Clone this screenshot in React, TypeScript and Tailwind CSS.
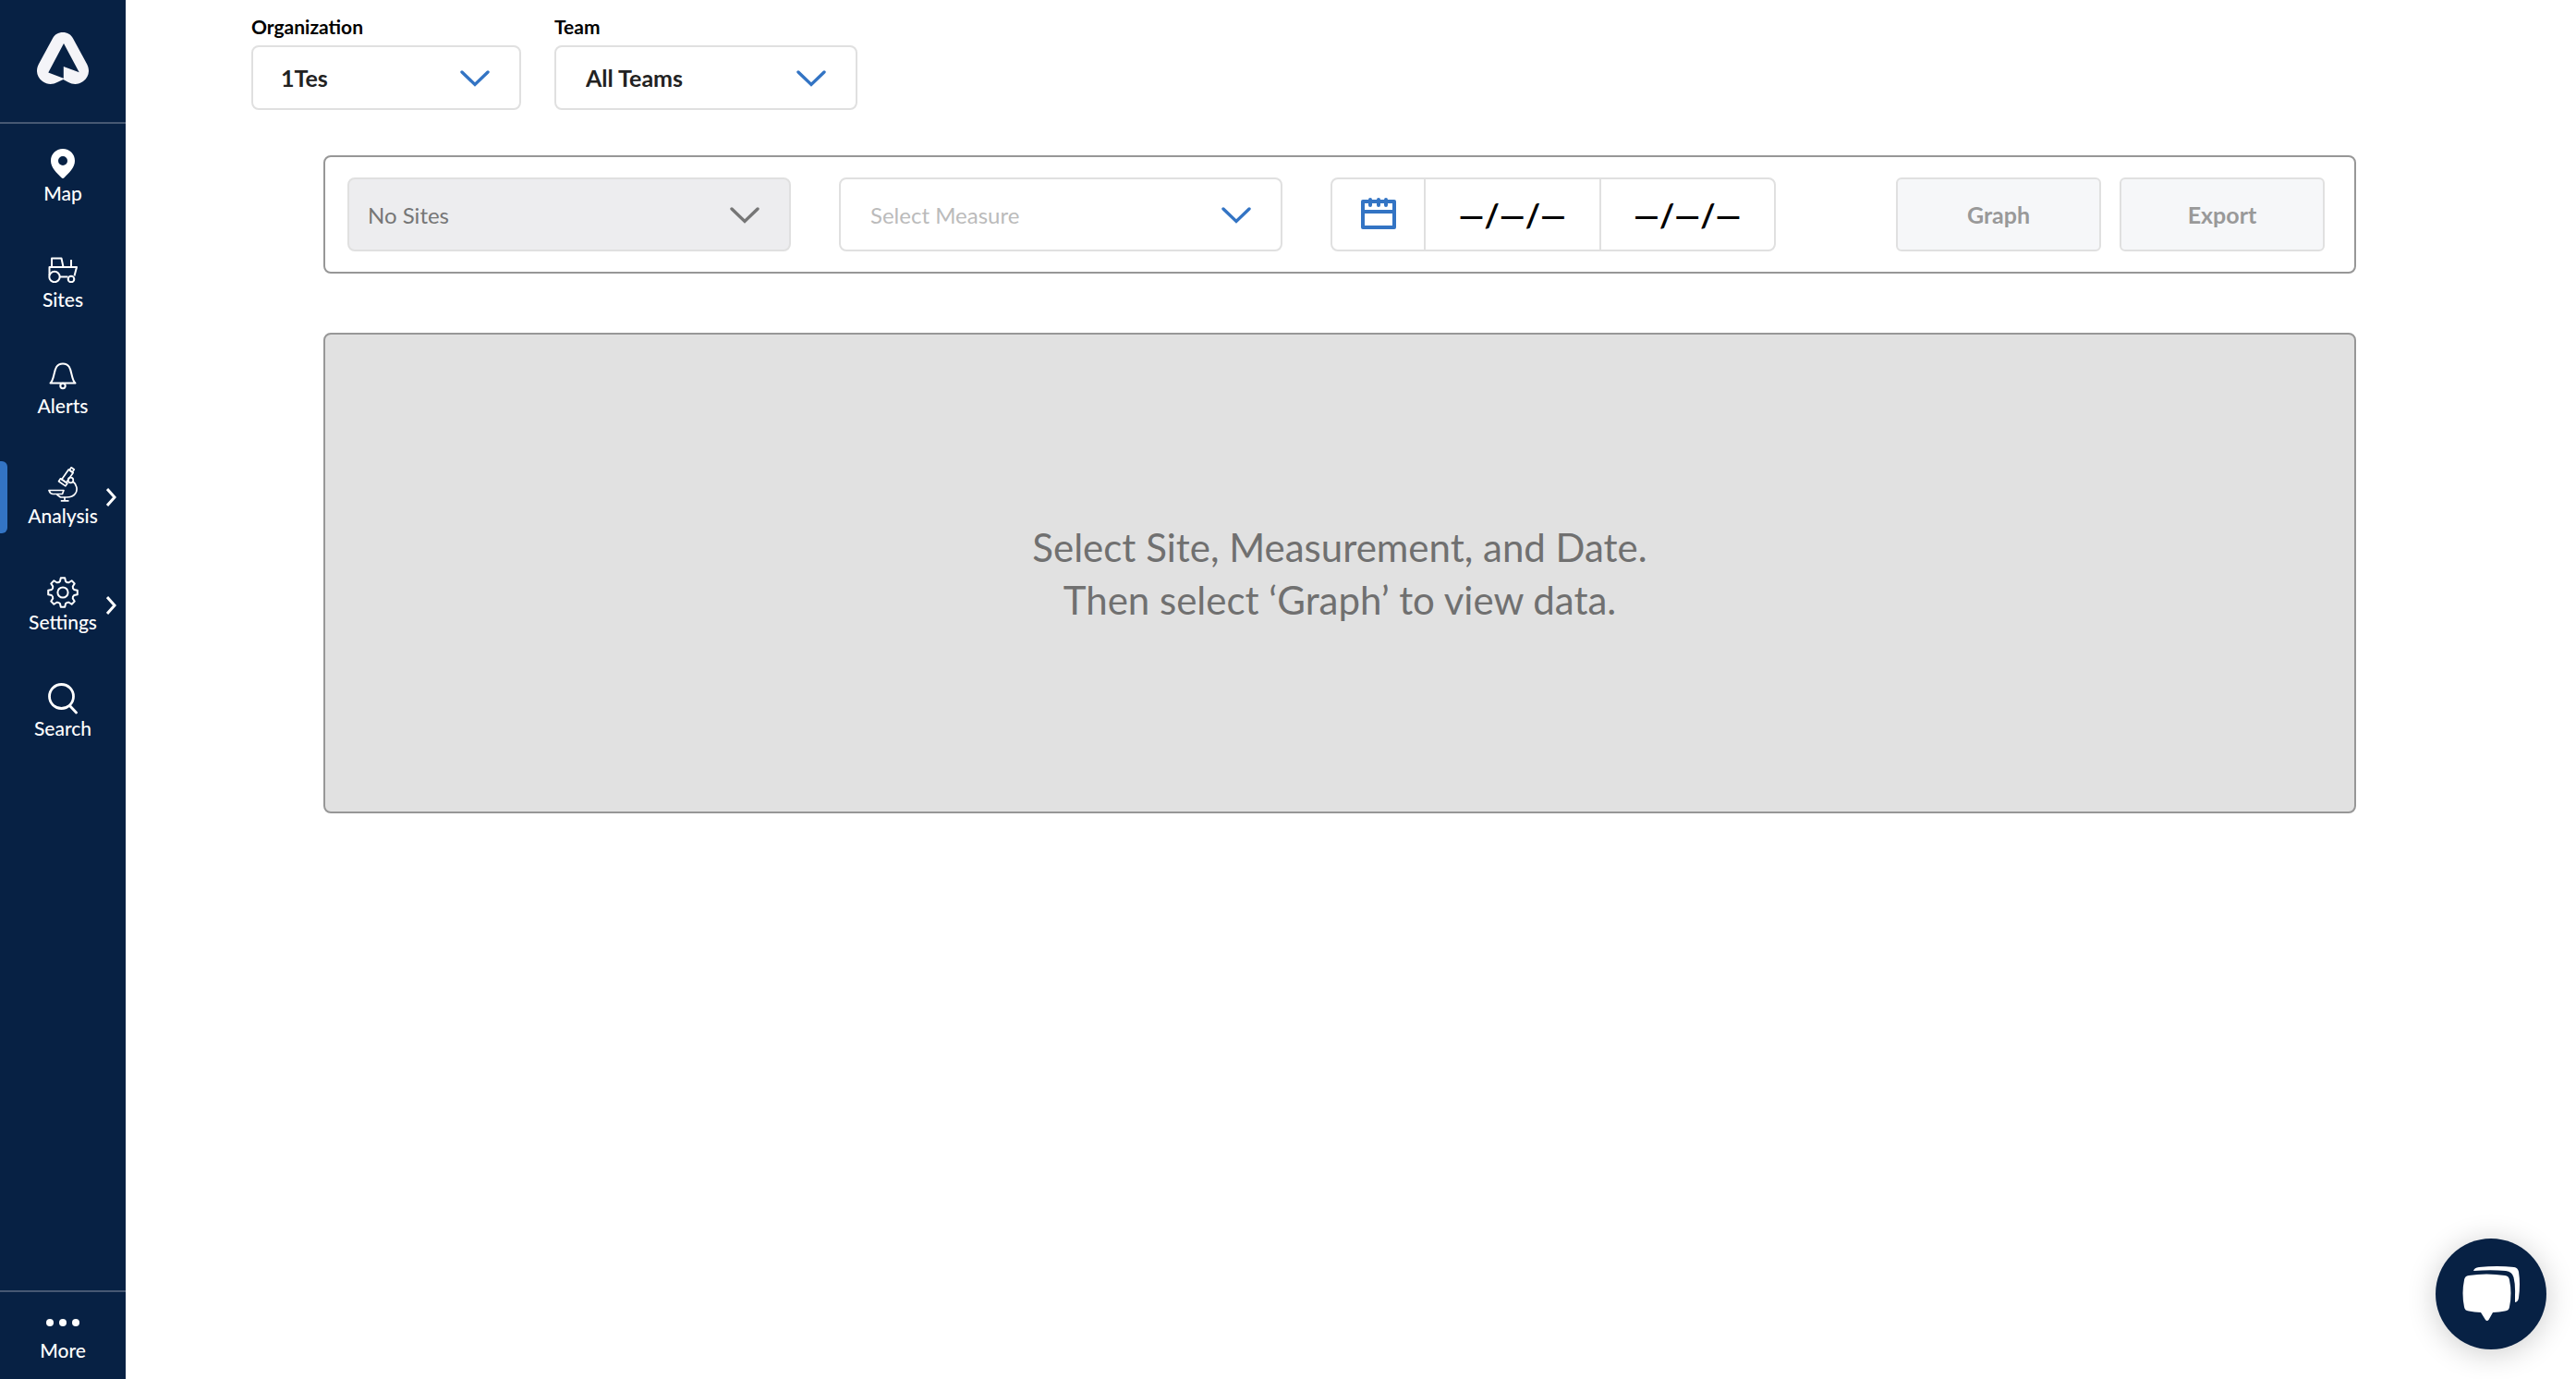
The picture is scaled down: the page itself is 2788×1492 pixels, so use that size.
import type { ReactNode } from "react";

const toothPoint = (x: number, y: number, deg: number) => {
  const a = (deg * Math.PI) / 180;
  const px = 17 + x * Math.cos(a) - y * Math.sin(a);
  const py = 17 + x * Math.sin(a) + y * Math.cos(a);
  return `${px.toFixed(2)} ${py.toFixed(2)}`;
};

const gearPath =
  [0, 45, 90, 135, 180, 225, 270, 315]
    .map(
      (d, i) =>
        `${i === 0 ? "M" : "L"}${toothPoint(-2.2, -15.8, d)} L${toothPoint(2.2, -15.8, d)} L${toothPoint(3, -12.2, d)} ` +
        `Q${toothPoint(4.4, -10.4, d)} ${toothPoint(-3, -12.2, d + 45)}`
    )
    .join(" ") + " Z";

function Logo() {
  return (
    <svg width="56" height="56" viewBox="0 0 56 56" aria-hidden="true">
      <path
        fill="#f4f4f8"
        fillRule="evenodd"
        d="M28 0C33 0 36.8 2.4 39 6.4L54.2 34.5C57.5 41 56.4 48.5 50 53C45 56.7 39 56.7 34 54L28.4 51L22 54C17 56.7 11 56.7 6 53C-.4 48.5 -1.5 41 1.8 34.5L17 6.4C19.2 2.4 23 0 28 0ZM29 12L12.3 43.6L28.8 49.8V37L45.7 43.3Z"
      />
    </svg>
  );
}

function MapIcon() {
  return (
    <svg width="26" height="32" viewBox="0 0 26 32" fill="#fff" aria-hidden="true">
      <path
        fillRule="evenodd"
        d="M13 0C5.6 0 0 5.6 0 13C0 20.5 6.5 26 11.5 31.2Q13 32.6 14.5 31.2C19.5 26 26 20.5 26 13C26 5.6 20.4 0 13 0ZM13 8A5 5 0 1 1 13 18A5 5 0 1 1 13 8Z"
      />
    </svg>
  );
}

function SitesIcon() {
  return (
    <svg width="32" height="28" viewBox="0 0 32 28" fill="none" stroke="#fff" strokeWidth="2" strokeLinejoin="round" aria-hidden="true">
      <path d="M4 11V1.5H14.5L16.5 11" />
      <path d="M1.5 20V11H31L28.5 20.5" />
      <path d="M25 3V11" />
      <path d="M13 21.5H21.5" />
      <circle cx="7" cy="21.5" r="5.7" />
      <circle cx="25" cy="24" r="3.3" />
    </svg>
  );
}

function AlertsIcon() {
  return (
    <svg width="30" height="30" viewBox="0 0 30 30" fill="none" stroke="#fff" strokeWidth="2" strokeLinejoin="round" aria-hidden="true">
      <path d="M1.5 22.5C7.5 17 3.5 1.5 15 1.5S22.5 17 28.5 22.5Z" />
      <circle cx="15" cy="25.5" r="2.7" />
    </svg>
  );
}

function AnalysisIcon() {
  return (
    <svg width="32" height="38" viewBox="0 0 32 38" fill="none" stroke="#fff" strokeWidth="1.7" strokeLinejoin="round" aria-hidden="true">
      <g transform="rotate(35 26 2)">
        <path d="M24.6 1.5H28.4V5H24.6Z" />
        <path d="M23.5 5H29.5V18H23.5Z" />
        <path d="M22 18H31V21.5H22Z" />
      </g>
      <circle cx="24.5" cy="14.5" r="2.8" />
      <path d="M27 16C31 19 32.5 25 29.5 29C27.5 32 24 33 20 33H13.5L9.5 30" />
      <path d="M1 25.5H17L15.5 29.5H5Q2 29 1 25.5Z" />
      <path d="M18 33V36.8M13.8 36.8H22.5" />
    </svg>
  );
}

function SettingsIcon() {
  return (
    <svg width="34" height="34" viewBox="0 0 34 34" fill="none" stroke="#fff" strokeWidth="2" strokeLinejoin="round" aria-hidden="true">
      <path d={gearPath} />
      <circle cx="17" cy="17" r="5.6" />
    </svg>
  );
}

function SearchIcon() {
  return (
    <svg width="32" height="34" viewBox="0 0 32 34" fill="none" stroke="#fff" strokeWidth="2.8" strokeLinecap="round" aria-hidden="true">
      <circle cx="14.5" cy="14.5" r="13" />
      <path d="M23.5 24.5L30.5 32" />
    </svg>
  );
}

function ChevronRight() {
  return (
    <svg className="absolute right-2.5 top-1/2 -translate-y-1/2" width="11" height="20" viewBox="0 0 11 20" fill="none" stroke="#fff" strokeWidth="3" aria-hidden="true">
      <path d="M1 1L9 10L1 19" />
    </svg>
  );
}

function ChevronDown({ className }: { className: string }) {
  return (
    <svg className={className} width="32" height="18" viewBox="0 0 32 18" fill="none" stroke="currentColor" strokeWidth="3.4" strokeLinecap="round" aria-hidden="true">
      <path d="M2 2L16 15.5L30 2" />
    </svg>
  );
}

function CalendarIcon() {
  return (
    <svg width="38" height="34" viewBox="0 0 38 34" fill="none" stroke="#3374c4" strokeWidth="4" aria-hidden="true">
      <path d="M2 4H36V32H2Z" strokeLinejoin="round" />
      <path d="M2 15H36" />
      <path d="M10 2V8M19 2V8M27 2V8" strokeLinecap="round" />
    </svg>
  );
}

function ChatIcon() {
  return (
    <svg width="64" height="60" viewBox="28 30 64 60" fill="#fff" aria-hidden="true">
      <path d="M36 40Q55 37 75 40Q79.5 40.5 80 45Q83 59 80 74Q79.5 78 75 78.5Q69 79.7 62 80L57.5 88Q55.7 90 54 88L49 80Q42 79.7 36 78.5Q31.5 78 31 74Q28 59 31 45Q31.5 40.5 36 40Z" />
      <path d="M41 35Q42 31.5 47 31Q67 29 85 31Q89 31.5 90 36Q92 49 90 64Q89.5 68.5 86 69V61Q86.5 50 84.5 42Q83 36 76 35Q60 33.5 41 35Z" />
    </svg>
  );
}

function NavItem({ label, icon, active, expandable }: { label: string; icon: ReactNode; active?: boolean; expandable?: boolean }) {
  return (
    <li>
      <a
        href={`#${label.toLowerCase()}`}
        aria-current={active ? "page" : undefined}
        className="relative flex flex-col items-center gap-[3px] pt-1.5 pb-[7px] text-[21px] leading-6 font-medium text-white"
      >
        {active && <span className="absolute inset-y-0 left-0 w-2 rounded-r-md bg-[#3374c4]" />}
        <span className="flex min-h-[34px] items-center">{icon}</span>
        {label}
        {expandable && <ChevronRight />}
      </a>
    </li>
  );
}

function Dropdown({ id, label, value, box, text, arrow, disabled }: { id: string; label?: string; value: string; box: string; text: string; arrow: string; disabled?: boolean }) {
  return (
    <div className={`relative rounded-lg border-2 border-[#e0e0e0] ${box}`}>
      <select id={id} aria-label={label} disabled={disabled} className={`h-full w-full appearance-none rounded-lg bg-transparent pt-0.5 pr-16 opacity-100 ${text}`}>
        <option>{value}</option>
      </select>
      <div className="pointer-events-none absolute inset-y-0 right-8 flex items-center pt-0.5">
        <ChevronDown className={arrow} />
      </div>
    </div>
  );
}

export default function App() {
  return (
    <div className="flex min-h-screen bg-white font-['Lato',sans-serif] text-black">
      <aside className="sticky top-0 flex h-screen w-[136px] shrink-0 flex-col bg-[#072144]">
        <a href="#home" aria-label="Home" className="flex justify-center border-b-2 border-[#465873] pt-[35px] pb-[41px]">
          <Logo />
        </a>
        <nav className="pt-5">
          <ul className="flex flex-col gap-[41px]">
            <NavItem label="Map" icon={<MapIcon />} />
            <NavItem label="Sites" icon={<SitesIcon />} />
            <NavItem label="Alerts" icon={<AlertsIcon />} />
            <NavItem label="Analysis" icon={<AnalysisIcon />} active expandable />
            <NavItem label="Settings" icon={<SettingsIcon />} expandable />
            <NavItem label="Search" icon={<SearchIcon />} />
          </ul>
        </nav>
        <button className="mt-auto flex flex-col items-center gap-3.5 border-t-2 border-[#465873] pt-[29px] pb-[19px] text-[21px] leading-6 font-medium text-white">
          <span className="flex gap-1.5">
            <span className="size-2 rounded-full bg-white" />
            <span className="size-2 rounded-full bg-white" />
            <span className="size-2 rounded-full bg-white" />
          </span>
          More
        </button>
      </aside>

      <main className="min-w-0 flex-1">
        <div className="flex gap-9 pt-[17px] pl-[136px]">
          <div>
            <label htmlFor="organization" className="mb-2 block text-[21px] leading-6 font-bold">
              Organization
            </label>
            <Dropdown id="organization" value="1Tes" box="h-[70px] w-[292px]" text="pl-[30px] text-[25px] font-bold text-[#222]" arrow="text-[#3374c4]" />
          </div>
          <div>
            <label htmlFor="team" className="mb-2 block text-[21px] leading-6 font-bold">
              Team
            </label>
            <Dropdown id="team" value="All Teams" box="h-[70px] w-[328px]" text="pl-8 text-[25px] font-bold text-[#222]" arrow="text-[#3374c4]" />
          </div>
        </div>

        <div className="mt-[49px] mr-[238px] ml-[214px]">
          <section className="flex items-center rounded-lg border-2 border-[#979797] py-[22px] pr-8 pl-6">
            <Dropdown id="sites" label="Sites" value="No Sites" disabled box="h-20 w-[480px] bg-[#ededef]" text="pl-5 text-2xl text-[#767676]" arrow="text-[#767676]" />
            <Dropdown id="measure" label="Measure" value="Select Measure" box="ml-[52px] h-20 w-[480px]" text="pl-8 text-2xl text-[#bbb]" arrow="text-[#3374c4]" />
            <div className="ml-[52px] flex h-20 w-[482px] divide-x-2 divide-[#e0e0e0] rounded-lg border-2 border-[#e0e0e0]">
              <button aria-label="Open calendar" className="flex w-[101px] items-center justify-center pb-0.5">
                <CalendarIcon />
              </button>
              <button aria-label="Start date" className="flex-1 text-[35px] font-bold">
                —/—/—
              </button>
              <button aria-label="End date" className="flex-1 text-[35px] font-bold">
                —/—/—
              </button>
            </div>
            <div className="ml-auto flex gap-5">
              <button disabled className="h-20 w-[222px] rounded-md border-2 border-[#e0e0e0] bg-[#f6f7f9] pt-0.5 text-[25px] font-bold text-[#999]">
                Graph
              </button>
              <button disabled className="h-20 w-[222px] rounded-md border-2 border-[#e0e0e0] bg-[#f6f7f9] pt-0.5 text-[25px] font-bold text-[#999]">
                Export
              </button>
            </div>
          </section>

          <section className="mt-16 flex h-[520px] items-center justify-center rounded-lg border-2 border-[#979797] bg-[#e1e1e1] pt-0.5">
            <p className="text-center text-[42px] leading-[57px] text-[#707070]">
              Select Site, Measurement, and Date.
              <br />
              Then select ‘Graph’ to view data.
            </p>
          </section>
        </div>
      </main>

      <button
        aria-label="Open chat"
        className="fixed right-8 bottom-8 flex size-[120px] items-center justify-center rounded-full bg-[#072144] shadow-[0_4px_32px_rgba(0,0,0,0.2)]"
      >
        <ChatIcon />
      </button>
    </div>
  );
}
